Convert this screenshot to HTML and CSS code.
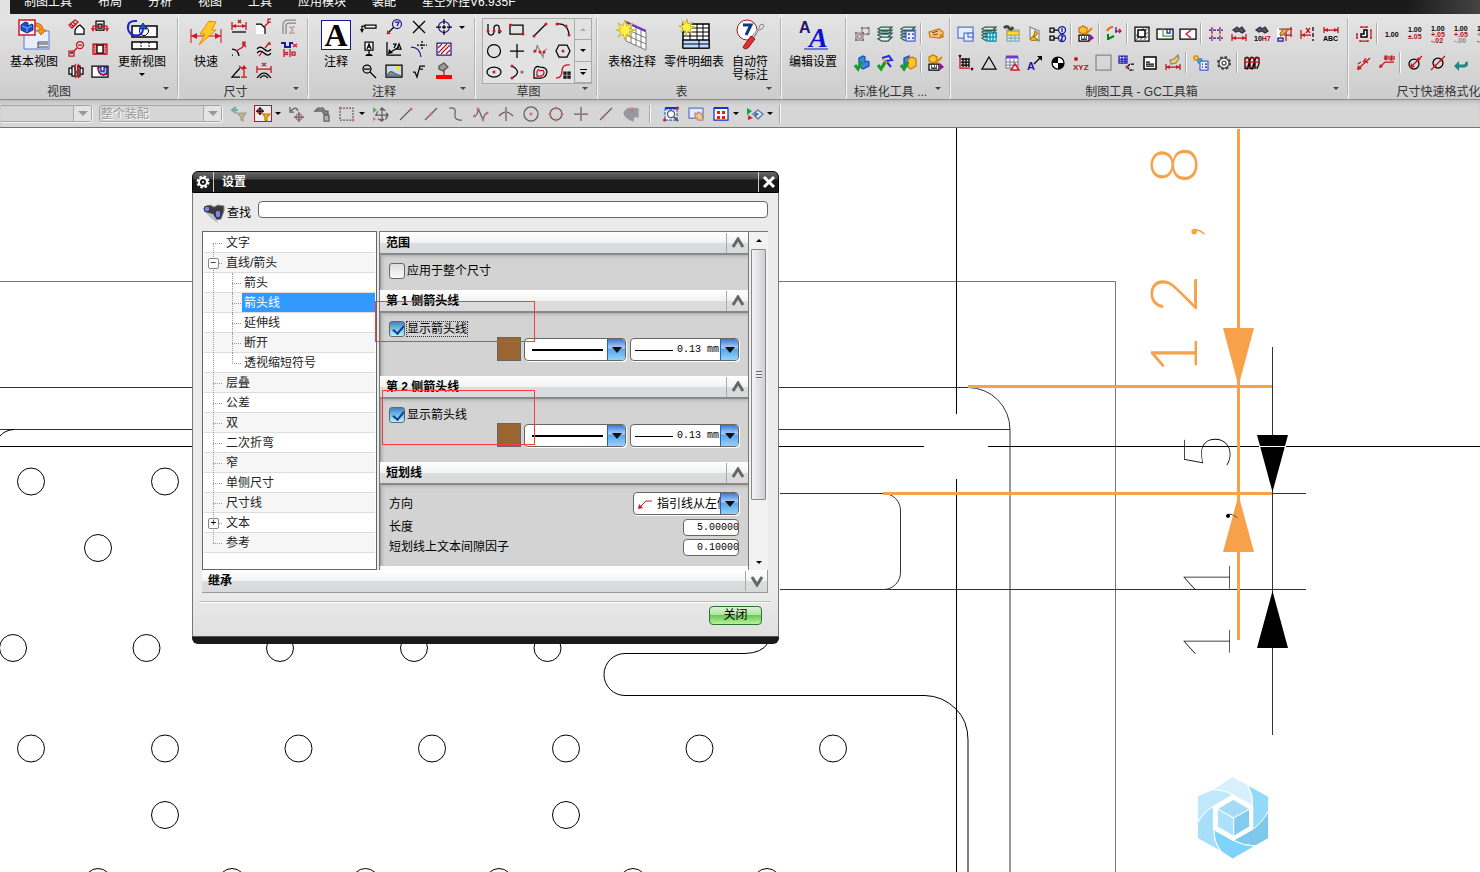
FILE: index.html
```html
<!DOCTYPE html>
<html lang="zh-CN">
<head>
<meta charset="utf-8">
<title>制图工具</title>
<link rel="stylesheet" href="styles.css">
</head>
<body>
<nav class="menu">
  <span class="menu-tab"></span>
  <a href="#">制图工具</a><a href="#">布局</a><a href="#">分析</a><a href="#">视图</a><a href="#">工具</a><a href="#">应用模块</a><a href="#">装配</a><a href="#">星空外挂V6.935F</a>
</nav>

<header class="ribbon">
  <section class="group g-view">
    <div class="group-body">
      <button class="big"><svg class="ic32" viewBox="0 0 32 32"><path class="pale" d="M6 12h25v18H6z"/><path d="M20 23h10M20 25h10M20 28h10M20 23v6" stroke="#444"/><path class="or" d="M17 4q8 0 8 7h3l-5 5-4-5h3q0-4-5-4z"/><path class="rw" d="M1 1h16v15H1z"/><path class="B" d="M3 6l4-3 3 1v3l4-2 1 1v5l-6 3-6-3z"/><path d="M4 7l5 2v4M9 9l5-2" stroke="#7db4ff"/></svg>基本视图</button>
      <div class="cols c2">
        <button class="t" aria-label="投影视图"><svg viewBox="0 0 16 16"><path class="r" d="M1 6l6-5 3 2-6 6zM3 5l3 3M5 3l3 3"/><path class="w" d="M7 15v-4q2-4 5-5l4 4v5z"/></svg></button>
        <button class="t" aria-label="旋转视图"><svg viewBox="0 0 16 16"><path class="w" d="M4 2h8v9H4z"/><path class="w" d="M6 5h4v4H6z"/><path class="r" d="M1 9V7h14v2"/><path class="R" d="M-1 9h4l-2 4zM13 9h4l-2 4z"/></svg></button>
        <button class="t" aria-label="局部放大图"><svg viewBox="0 0 16 16"><circle class="r" cx="12" cy="4" r="3.500"/><path class="r" d="M9 7l-4 4M1 10h5v5H1zM10 4h4"/><path d="M2 12h3"/></svg></button>
        <button class="t" aria-label="断开视图"><svg viewBox="0 0 16 16"><path class="rl" d="M2 3h3v10H2zM11 3h3v10h-3z"/><path class="r" d="M1 3h14v10H1z"/><path class="w" d="M5 4h6v8H5z"/></svg></button>
        <button class="t" aria-label="展开剖"><svg viewBox="0 0 16 16"><path class="w" d="M1 5h3v6H1zM4 3h3v10H4zM10 3h2v10h-2zM12 5h3v6h-3z"/><path class="r" d="M8 1q-3 3 0 7t-1 7M11 1q-3 3 0 7t-1 7"/></svg></button>
        <button class="t" aria-label="局部剖视图"><svg viewBox="0 0 16 16"><path class="w" d="M0 3h16v11H0z"/><path class="hb" d="M6 4q0 7 5 8l4-2V4h-3v4H9V4z"/><path class="r" d="M6 4q0 8 5 8t5-2"/></svg></button>
      </div>
      <button class="big"><svg class="ic32" viewBox="0 0 32 32"><path class="w2" d="M6 7h25v11H6z"/><circle cx="18" cy="12" r="4.500"/><path class="w2" d="M6 23h25v7H6z"/><path d="M15 23v7M23 23v7" stroke-dasharray="2 1"/><path d="M11 2Q1 1 2 10q2 8 11 6 4-1 4-7" stroke="#2222cc" stroke-width="2"/><path class="B" d="M17 4l4 6h-8z"/></svg>更新视图<i class="dd"></i></button>
    </div>
    <h2>视图</h2><i class="dd corner"></i>
  </section>

  <section class="group g-size">
    <div class="group-body">
      <button class="big narrow"><svg class="ic32" viewBox="0 0 32 32"><path class="r" d="M1 10v14M31 10v14M1 17h30" /><path class="R" d="M1 17l6-3v6zM31 17l-6-3v6z"/><path d="M19 2l7 1-4 8h4L9 26l6-11h-5z" fill="#ffc928" stroke="#f08a00"/></svg>快速</button>
      <div class="cols c3">
        <button class="t" aria-label="线性"><svg viewBox="0 0 16 16"><path class="r" d="M1 3v8M15 3v8M1 7h14"/><path class="R" d="M1 7l4-2v4zM15 7l-4-2v4z"/><path class="r" d="M7 1l3 3M10 1L7 4"/><path d="M1 13h14"/></svg></button>
        <button class="t" aria-label="倒斜角"><svg viewBox="0 0 16 16"><path class="W" d="M0 6h6l3 3v6H0z"/><path d="M0 5h5l4 4v6"/><path class="r" d="M8 8l5-5M15 0h-3v3h3"/></svg></button>
        <button class="t" aria-label="折弯"><svg viewBox="0 0 16 16"><path class="g" d="M2 15V6q0-5 5-5h8M5 15V7q0-3 3-3h7"/><path d="M14 8H9l3 3-3 3h5" stroke="#b99"/></svg></button>
        <button class="t" aria-label="半径"><svg viewBox="0 0 16 16"><path d="M1 8q6 0 7 7M1 14h1"/><path class="r" d="M5 10l7-4M12 6V1h2v2h-2l3 3"/></svg></button>
        <button class="t" aria-label="厚度"><svg viewBox="0 0 16 16"><path d="M1 8q3-4 7 0t7 0M1 12q3-4 7 0t7 0"/><path class="r" d="M3 15l3-4M9 7l5-6M11 3h4"/></svg></button>
        <button class="t" aria-label="坐标"><svg viewBox="0 0 16 16"><path class="b" d="M0 2h4v4h5V2h3" stroke-width="2"/><path class="r" d="M3 8v8M9 8v8M12 3l4 3M12 6l4-3M4 11l3 3M4 14l3-3M11 11h3v3h-3z"/></svg></button>
        <button class="t" aria-label="角度"><svg viewBox="0 0 16 16"><path d="M9 5L1 14h8"/><path class="r" d="M8 3l5 4v7M10 14h6"/><path class="R" d="M10 6l3-4 3 4z"/></svg></button>
        <button class="t" aria-label="弧长"><svg viewBox="0 0 16 16"><path class="r" d="M1 3v7M15 3v7M1 6h14M6 0l4 3M10 0L6 3"/><path d="M1 15q7-10 14 0M4 15q4-5 8 0"/></svg></button>
      </div>
    </div>
    <h2>尺寸</h2><i class="dd corner"></i>
  </section>

  <section class="group g-note">
    <div class="group-body">
      <button class="big narrow"><span class="bigA">A</span>注释</button>
      <div class="cols c4">
        <button class="t" aria-label="特征控制框"><svg viewBox="0 0 16 16"><path class="w" d="M4 6h11v3H4z"/><path d="M1 12V7h3"/><path class="K" d="M-1 10h4l-2 4z"/></svg></button>
        <button class="t" aria-label="符号标注"><svg viewBox="0 0 16 16"><circle class="b" cx="11" cy="5" r="4.500"/><path class="b" d="M9 3h4l-2 4"/><path d="M8 8l-7 7"/><path class="R" d="M1 11v4h4z"/></svg></button>
        <button class="t" aria-label="相交符号"><svg viewBox="0 0 16 16"><path d="M2 2l12 12M14 2L2 14"/></svg></button>
        <button class="t" aria-label="中心标记"><svg viewBox="0 0 16 16"><circle class="b" cx="8" cy="8" r="5.500"/><path d="M8 0v5M8 6v4M8 11v5M0 8h5M6 8h4M11 8h5"/></svg></button>
        <button class="t" aria-label="基准特征"><svg viewBox="0 0 16 16"><path class="w" d="M4 1h8v8H4z"/><path d="M6 8l2-5 2 5M7 6h2M8 9v5"/><path class="K" d="M4 15h8l-2-2H6z"/></svg></button>
        <button class="t" aria-label="表面粗糙度"><svg viewBox="0 0 16 16"><path d="M1 1v13h14M3 12L13 6M7 3h3L8 7M11 8l2-5 2 5z"/><path class="K" d="M2 13l1-5 4 4z"/></svg></button>
        <button class="t" aria-label="偏置中心点"><svg viewBox="0 0 16 16"><path class="b" d="M0 6q9 0 10 10"/><path d="M11 0v8M6 4h10" stroke-dasharray="2 1"/></svg></button>
        <button class="t" aria-label="剖面线"><svg viewBox="0 0 16 16"><path class="W" d="M1 2h14v12H1z"/><path class="r" d="M2 7l4-4M2 12l9-9M5 13l9-9M10 13l4-4"/><path class="b" d="M1 2h14v12H1z"/></svg></button>
        <button class="t" aria-label="焊接符号"><svg viewBox="0 0 16 16"><circle cx="6" cy="6" r="4"/><path d="M3 6h6M9 9l6 6"/></svg></button>
        <button class="t" aria-label="图像"><svg viewBox="0 0 16 16"><path d="M0 2h16v12H0z" fill="#cfdbe6"/><path d="M1 13q3-7 7-3l7 3z" fill="#7a8ea3" stroke="#567"/><circle class="Y" cx="12" cy="5" r="2"/></svg></button>
        <button class="t" aria-label="目标点"><svg viewBox="0 0 16 16"><path d="M2 9h2l2 5 3-11h5M9 6h3"/></svg></button>
        <button class="t" aria-label="填充"><svg viewBox="0 0 16 16"><path d="M3 3l5-3 4 4-5 4-4-2z" fill="#999" stroke="#555"/><path class="r" d="M8 7v5"/><path fill="#f00" stroke="none" d="M0 12h16v4H0z"/></svg></button>
      </div>
      <i class="dd note-dd"></i>
    </div>
    <h2>注释</h2><i class="dd corner"></i>
  </section>

  <section class="group g-sketch">
    <div class="group-body">
      <div class="gallery">
        <div class="gallery-grid">
          <button class="t" aria-label="轮廓"><svg viewBox="0 0 16 16"><path d="M2 2v7q0 4 3 4t3-4V6q0-3 3-3t2 6q-1 4 2 0"/><g class="R"><circle cx="2" cy="9" r="1.500"/><circle cx="8" cy="9" r="1.500"/><circle cx="14" cy="9" r="1.500"/></g></svg></button>
          <button class="t" aria-label="矩形"><svg viewBox="0 0 16 16"><path d="M1 3h13v9H1z"/><g class="R"><circle cx="1.500" cy="3" r="1.500"/><circle cx="14" cy="12" r="1.500"/></g></svg></button>
          <button class="t" aria-label="直线"><svg viewBox="0 0 16 16"><path d="M2 14L14 2"/><g class="R"><circle cx="2" cy="14" r="1.500"/><circle cx="14" cy="2" r="1.500"/></g></svg></button>
          <button class="t" aria-label="圆弧"><svg viewBox="0 0 16 16"><path d="M2 2q11-1 12 11"/><g class="R"><circle cx="2" cy="2" r="1.500"/><circle cx="11" cy="4" r="1.500"/><circle cx="14" cy="13" r="1.500"/></g></svg></button>
          <button class="t" aria-label="圆"><svg viewBox="0 0 16 16"><circle cx="8" cy="8" r="6.500"/></svg></button>
          <button class="t" aria-label="点"><svg viewBox="0 0 16 16"><path d="M8 1v14M1 8h14"/></svg></button>
          <button class="t" aria-label="艺术样条"><svg viewBox="0 0 16 16"><path class="g" d="M1 9q4 0 4-7 3 7 6 12 0-7 4-8"/><g class="R"><circle cx="3" cy="8" r="1.500"/><circle cx="8" cy="9" r="1.500"/><circle cx="12" cy="9" r="1.500"/></g></svg></button>
          <button class="t" aria-label="多边形"><svg viewBox="0 0 16 16"><path d="M4 2h8l3 6-3 6H4L1 8z"/><circle class="R" cx="8" cy="8" r="1.500"/></svg></button>
          <button class="t" aria-label="椭圆"><svg viewBox="0 0 16 16"><ellipse cx="8" cy="8" rx="7" ry="5"/><circle class="R" cx="8" cy="8" r="1.500"/></svg></button>
          <button class="t" aria-label="二次曲线"><svg viewBox="0 0 16 16"><path d="M3 2q11 6 0 12"/><g class="R"><circle cx="3" cy="2" r="1.500"/><circle cx="3" cy="14" r="1.500"/></g><circle cx="13" cy="8" r="1" fill="#777" stroke="#777"/></svg></button>
          <button class="t" aria-label="偏置曲线"><svg viewBox="0 0 16 16"><path d="M2 14V7q1-6 6-4 7 0 7 5-1 6-6 6z"/><path class="r" d="M5 12V8q1-4 3-1 4-2 4 2-1 3-3 3z"/></svg></button>
          <button class="t" aria-label="阵列曲线"><svg viewBox="0 0 16 16"><path class="r" d="M15 1Q7 0 7 7t-6 7"/><path class="w" d="M9 8h2v2H9zM13 8h2v2h-2zM9 12h2v2H9zM13 12h2v2h-2z"/></svg></button>
        </div>
        <div class="gallery-scroll"><button aria-label="上"><i class="up"></i></button><button aria-label="下"><i class="dd"></i></button><button aria-label="更多"><i class="bar"></i><i class="dd"></i></button></div>
      </div>
    </div>
    <h2>草图</h2><i class="dd corner"></i>
  </section>

  <section class="group g-table">
    <div class="group-body">
      <button class="big"><svg class="ic32" viewBox="0 0 32 32"><path d="M10 4l20 9v18l-20-9z" fill="#fff" stroke="#777"/><path d="M10 10l20 9M10 16l20 9M15 6v18M20 8v18M25 11v18" stroke="#777"/><path d="M10 3l20 9" stroke="#7038c8" stroke-width="2"/><path class="star" d="M9 1l2 6 6-3-4 6 6 1-6 2 3 5-5-3-2 6-2-6-5 3 3-5-5-2 5-1-3-6 5 3z"/></svg>表格注释</button>
      <button class="big"><svg class="ic32" viewBox="0 0 32 32"><path class="w2" d="M5 5h26v24H5z"/><path d="M5 21h26v8H5z" fill="#bcdcff"/><path d="M5 9h26M5 13h26M5 17h26M5 21h26M5 25h26M12 5v16M19 5v16M25 5v16M21 21v8"/><path class="star" d="M9 0l1 5 5-2-3 4 5 1-5 2 2 4-4-2-2 4-1-5-4 2 2-4-4-2 5-1-2-4 4 2z"/></svg>零件明细表</button>
      <button class="big"><svg class="ic32" viewBox="0 0 32 32"><circle cx="13" cy="11" r="10" fill="#fff" stroke="#a01818"/><path d="M9 6h8l-5 10" stroke="#123a80" stroke-width="3"/><path d="M18 17l7-8 1-3 3-1 1 2-2 3-3 1-6 8z" fill="#ddd" stroke="#888"/><path d="M17 17l4 3-7 9q-4 2-5-1z" fill="#e03030" stroke="#a01010"/></svg>自动符<br>号标注</button>
    </div>
    <h2>表</h2><i class="dd corner"></i>
  </section>

  <section class="group g-edit">
    <div class="group-body"><button class="big"><svg class="ic32" viewBox="0 0 32 32"><text x="2" y="14" class="ta">A</text><text x="12" y="28" class="tb">A</text><path d="M7 30h24" stroke="#1010d0"/></svg>编辑设置</button></div>
  </section>

  <section class="group g-std">
    <div class="group-body rows">
      <div class="row">
        <button class="t" aria-label="属性工具"><svg viewBox="0 0 16 16"><path class="g" d="M2 7h7v7H2zM8 2h7v6H8z" /><path class="gd" d="M1 6h2v2H1zM8 6h2v2H8zM1 13h2v2H1zM8 13h2v2H8zM13 1h2v2h-2zM13 7h2v2h-2zM7 1h2v2H7z"/><circle cx="5.500" cy="10.500" r="2" stroke="#b77"/></svg></button>
        <button class="t" aria-label="图层"><svg viewBox="0 0 16 16"><path class="lay" d="M1 13l3-2h11l-4 4H5zM1 9l3-2h11l-4 4H5zM1 6l3-2h11l-4 4H5zM1 3l3-2h11l-4 4H5z"/></svg></button>
        <button class="t" aria-label="图层类别"><svg viewBox="0 0 16 16"><path class="lay" d="M1 12l3-2h11l-4 4H4zM1 9l3-2h11l-4 4H4zM1 6l3-2h11l-4 4H4zM1 3l3-2h11l-4 4H4z"/><path d="M6 5h9v10H6z" fill="#eef" stroke="#46c"/><path class="b" d="M8 8h2M8 12h2M12 8h2M12 12h2"/></svg></button>
        <i class="sep"></i>
        <button class="t" aria-label="标签"><svg viewBox="0 0 16 16"><path d="M1 6l10-3 4 3v5h-2V8l-1 4-10-1z" fill="#ffc966" stroke="#c07810"/><path d="M4 7l6-2M5 9l5-1" stroke="#844"/></svg></button>
      </div>
      <div class="row">
        <button class="t" aria-label="检查部件"><svg viewBox="0 0 16 16"><path class="B3" d="M5 3l4-2 2 1v5l3-1 1 1v4l-6 3-4-3z"/><path class="chk" d="M1 10l3 4 4-7"/></svg></button>
        <button class="t" aria-label="检查草图"><svg viewBox="0 0 16 16"><path d="M5 3l7-2 3 4-6 1 5 6" stroke="#23c" stroke-width="2"/><path d="M5 4l5 3-4 6" stroke="#f80"/><path class="chk" d="M1 10l3 4 4-7"/></svg></button>
        <button class="t" aria-label="检查装配"><svg viewBox="0 0 16 16"><path class="B3" d="M4 3l5-2v9l-5 3z"/><path class="O3" d="M8 4l4-2 4 2v7l-5 3-3-2z"/><path class="chk" d="M1 10l3 4 4-7"/></svg></button>
        <i class="sep"></i>
        <button class="t" aria-label="规范"><svg viewBox="0 0 16 16"><path class="O3" d="M1 2l4-2 4 2v4L5 8 1 6z"/><path d="M8 8l6-6" stroke="#d80" stroke-width="2"/><path class="w" d="M1 9h10v6H1z"/><path d="M3 11h1M6 11h1M8 11h1M3 13h6"/><path fill="#a0a" stroke="none" d="M12 8l4 4-4 3z"/></svg></button>
      </div>
    </div>
    <h2>标准化工具 ...</h2><i class="dd corner"></i>
  </section>

  <section class="group g-gc">
    <div class="group-body rows">
      <div class="row">
        <button class="t" aria-label="图框"><svg viewBox="0 0 16 16"><path class="pale" d="M0 1h15v11H0z"/><path class="pale" d="M6 7h9v8H6z" /><path class="pale" d="M10 7h5v4h-5z"/></svg></button>
        <button class="t" aria-label="图层表"><svg viewBox="0 0 16 16"><path class="lay" d="M1 12l3-2h11l-4 4H4zM1 9l3-2h11l-4 4H4zM1 6l3-2h11l-4 4H4zM1 3l3-2h11l-4 4H4z"/><path d="M6 7h9v8H6zM6 11h9M9 7v8M12 7v8" fill="#cff" stroke="#08a"/></svg></button>
        <button class="t" aria-label="查找表"><svg viewBox="0 0 16 16"><path d="M3 4h12v11H3z" fill="#d5e8fa" stroke="#8ab"/><path d="M3 5h12v4H3z" fill="#ffd83a" stroke="#ca2"/><path d="M0 2q3-3 5 0t4-1" stroke="#444" stroke-width="3"/><path d="M7 9v6M11 9v6M3 12h12" stroke="#8ab"/></svg></button>
        <button class="t" aria-label="区域"><svg viewBox="0 0 16 16"><path d="M3 1l9 4v10L3 11z" fill="#eee" stroke="#88a"/><path d="M8 5q5 2-1 6l4 3q-8 1-8-1 5-3 5-8z" fill="#ffc928" stroke="#a70"/></svg></button>
        <button class="t" aria-label="序号"><svg viewBox="0 0 16 16"><path d="M0 2h4v4H0zM0 10h4v4H0zM4 4h5M4 12h5"/><circle class="b" cx="12" cy="4" r="3.500"/><circle class="b" cx="12" cy="12" r="3.500"/><path class="b" d="M12 2v4M11 10h2l-2 4h2"/></svg></button>
        <i class="sep"></i>
        <button class="t" aria-label="编辑规范"><svg viewBox="0 0 16 16"><path class="O3" d="M1 2l4-2 4 2v4L5 8 1 6z"/><path d="M8 8l6-6" stroke="#d80" stroke-width="2"/><path class="w" d="M1 9h10v6H1z"/><path d="M3 11h1M6 11h1M8 11h1M3 13h6"/><path fill="#a0a" stroke="none" d="M12 8l4 4-4 3z"/></svg></button>
        <i class="sep"></i>
        <button class="t" aria-label="坐标系"><svg viewBox="0 0 16 16"><path d="M2 14V8M2 13l6-3" stroke="#080" stroke-width="2"/><path d="M1 5q2-4 6-4" stroke="#e60" stroke-width="2"/><path class="r" d="M9 5h6M13 3l2 2-2 2" /><path d="M10 7V1" stroke="#22a"/></svg></button>
        <i class="sep"></i>
        <button class="t" aria-label="孔剖"><svg viewBox="0 0 16 16"><path class="w" d="M1 1h14v14H1z"/><path d="M2 14L14 2M6 14l8-8M2 10l8-8M10 14l4-4" stroke="#888"/><path class="w2" d="M4 4h7v7H4z"/></svg></button>
        <button class="t" aria-label="剖切"><svg viewBox="0 0 16 16"><path class="w" d="M0 3h16v10H0z"/><path d="M6 3v7h9" stroke="#3a3"/><path class="b" d="M10 3v4h3V3"/></svg></button>
        <button class="t" aria-label="断裂"><svg viewBox="0 0 16 16"><path class="w" d="M0 3h16v10H0z"/><path class="r" d="M11 4L6 8l5 4"/></svg></button>
        <i class="sep"></i>
        <button class="t" aria-label="栅格"><svg viewBox="0 0 16 16"><path class="b" d="M1 4h14M1 12h14" stroke-dasharray="3 1"/><path class="r" d="M4 1v14M12 1v14" stroke-dasharray="3 1"/></svg></button>
        <button class="t" aria-label="查找尺寸"><svg viewBox="0 0 16 16"><path class="bin" d="M2 4l4-3 2 2 3-2 3 4-3 2-3-2-3 1z"/><path class="r" d="M1 8v7M15 8v7M1 12h14"/><path class="R" d="M1 12l4-2v4zM15 12l-4-2v4z"/></svg></button>
        <button class="t" aria-label="查找公差"><svg viewBox="0 0 16 16"><path class="bin" d="M2 4l4-3 2 2 3-2 3 4-3 2-3-2-3 1z"/><text x="0" y="15" class="ts">10<tspan class="tr">H7</tspan></text></svg></button>
        <button class="t" aria-label="排列尺寸"><svg viewBox="0 0 16 16"><path class="W" d="M0 2h9v9H0z"/><path class="r" d="M2 3h13M7 9h8M14 1v10M9 3v12"/><path d="M3 8l3-5 5 1-3 3-4 3z" fill="#f5b82e" stroke="#964"/><path class="b" d="M1 12h5v3H1z"/></svg></button>
        <button class="t" aria-label="清除尺寸"><svg viewBox="0 0 16 16"><path class="r" d="M1 4v9M1 9h10M6 2l4 5M10 2L6 7"/><path class="R" d="M1 9l4-2v4z"/><path d="M13 1v14" stroke-dasharray="4 2"/></svg></button>
        <button class="t" aria-label="尺寸文本"><svg viewBox="0 0 16 16"><path class="r" d="M1 1v6M15 1v6M1 4h14"/><path class="R" d="M1 4l4-2v4zM15 4l-4-2v4z"/><text x="0" y="15" class="ts">ABC</text></svg></button>
      </div>
      <div class="row">
        <button class="t" aria-label="网格"><svg viewBox="0 0 16 16"><path d="M3 4h8M3 7h8M3 10h8M5 3v9M8 3v9M11 3v9M13 13l2 2M15 13l-2 2"/><path class="r" d="M2 3v10h10"/><path d="M1 0l1 2 1-2"/></svg></button>
        <button class="t" aria-label="三角"><svg viewBox="0 0 16 16"><path d="M8 2l7 12H1z"/></svg></button>
        <button class="t" aria-label="表格符号"><svg viewBox="0 0 16 16"><path d="M2 2h12v11H2zM2 7h12M2 10h12M6 4v9M10 4v9" fill="#fff" stroke="#88a"/><path d="M2 2h12" stroke="#7038c8" stroke-width="3"/><path class="rw" d="M11 9l4 6H7z"/></svg></button>
        <button class="t" aria-label="方向箭头"><svg viewBox="0 0 16 16"><text x="0" y="15" class="tn">A</text><path d="M7 9l7-7"/><path class="K" d="M15 1v5l-5-5z"/></svg></button>
        <button class="t" aria-label="质心"><svg viewBox="0 0 16 16"><circle cx="8" cy="8" r="6" fill="#fff"/><path class="K" d="M8 8V2a6 6 0 0 0-6 6zM8 8v6a6 6 0 0 0 6-6z"/></svg></button>
        <button class="t" aria-label="坐标标注"><svg viewBox="0 0 16 16"><circle class="R" cx="3" cy="4" r="2"/><text x="0" y="15" class="tx">XYZ</text></svg></button>
        <button class="t" aria-label="方框"><svg viewBox="0 0 16 16"><path class="g" d="M0 0h15v15H0z"/></svg></button>
        <button class="t" aria-label="孔表"><svg viewBox="0 0 16 16"><path d="M0 1h8v7H0zM0 4h8M0 6h8M3 1v7M6 1v7" fill="#fff" stroke="#22a"/><path d="M15 9h-4l-3 3 3 3h4" stroke-dasharray="3 1"/><circle class="R" cx="8" cy="12" r="1.500"/></svg></button>
        <button class="t" aria-label="技术要求"><svg viewBox="0 0 16 16"><path class="w2" d="M2 2h12v12H2z"/><path d="M4 7h4M4 9h8M4 11h8"/></svg></button>
        <button class="t" aria-label="尺寸刷"><svg viewBox="0 0 16 16"><path d="M5 5l4-1 4-4 1 3-3 5-5 1z" fill="#f2cf4a" stroke="#888"/><path class="r" d="M1 9v6M15 9v6M1 12h14"/><path class="R" d="M1 12l4-2v4zM15 12l-4-2v4z"/></svg></button>
        <i class="sep"></i>
        <button class="t" aria-label="齿轮参数"><svg viewBox="0 0 16 16"><circle cx="3" cy="3" r="2" stroke="#e90" stroke-width="2"/><circle cx="7" cy="6" r="2" stroke="#39c" stroke-width="2"/><path d="M7 6h8v9H7z" fill="#eef" stroke="#46c"/><path class="b" d="M9 9h1M9 12h1M12 9h2M12 12h2"/></svg></button>
        <button class="t" aria-label="齿轮"><svg viewBox="0 0 16 16"><circle cx="8" cy="8" r="6" stroke="#444" stroke-width="2" stroke-dasharray="2.500 2.200"/><circle cx="8" cy="8" r="5" fill="#fff" stroke="#444"/><circle cx="8" cy="8" r="2" stroke="#444"/></svg></button>
        <i class="sep"></i>
        <button class="t" aria-label="弹簧"><svg viewBox="0 0 16 16"><path d="M1 14V4q2-4 4 0v8q-2 4-4 0M6 14V4q2-4 4 0v8q-2 4-4 0M11 14V4q2-4 4 0v5l-2 5M3 14L7 2M8 14l4-12"/><path class="r" d="M0 3h16M0 7h15M0 12h14" /></svg></button>
      </div>
    </div>
    <h2>制图工具 - GC工具箱</h2><i class="dd corner"></i>
  </section>

  <section class="group g-fmt">
    <div class="group-body rows">
      <div class="row">
        <button class="t" aria-label="尺寸格式"><svg viewBox="0 0 16 16"><path class="w2" d="M5 11V8h3V4h3v7z"/><path class="r" d="M5 1h6M5 0v2M11 0v2M1 8v4M0 8h2M0 12h2M15 4v8M14 4h2M14 12h2M4 15h8M4 14v2M12 14v2"/></svg></button>
        <i class="sep"></i>
        <button class="t" aria-label="无公差"><svg viewBox="0 0 16 16"><text x="1" y="11" class="tm">1.00</text></svg></button>
        <button class="t" aria-label="双向公差"><svg viewBox="0 0 16 16"><text x="1" y="6" class="tm">1.00</text><text x="1" y="13" class="tm tr">±.05</text></svg></button>
        <button class="t" aria-label="极限公差"><svg viewBox="0 0 16 16"><text x="1" y="5" class="tm">1.00</text><text x="1" y="11" class="tm tr">+.05</text><text x="1" y="17" class="tm tr">-.02</text></svg></button>
        <button class="t" aria-label="上公差"><svg viewBox="0 0 16 16"><text x="1" y="5" class="tm">1.00</text><text x="1" y="11" class="tm tr">+.05</text><text x="1" y="17" class="tm tg">-.00</text></svg></button>
        <button class="t" aria-label="下公差"><svg viewBox="0 0 16 16"><text x="1" y="5" class="tm">1.00</text><text x="1" y="11" class="tm tg">+.00</text><text x="1" y="17" class="tm tr">-.05</text></svg></button>
      </div>
      <div class="row">
        <button class="t" aria-label="半径直径"><svg viewBox="0 0 16 16"><path class="r" d="M2 14L14 3M2 9l3-2M8 5l4 3M7 7l3-4"/><path class="R" d="M1 15l1-5 4 4z"/></svg></button>
        <button class="t" aria-label="半径引线"><svg viewBox="0 0 16 16"><path class="r" d="M1 12l5-5h9M6 5V1h2v2H6l2 2M10 1v4M12 1h1v4h-1zM15 1v4"/><path class="R" d="M0 13l1-4 3 3z"/></svg></button>
        <i class="sep"></i>
        <button class="t" aria-label="直径"><svg viewBox="0 0 16 16"><circle cx="7" cy="9" r="5"/><path class="r" d="M4 12L15 1"/><path class="R" d="M3 13l1-5 4 4zM9 6l2-4 3 3z"/></svg></button>
        <button class="t" aria-label="外直径"><svg viewBox="0 0 16 16"><circle cx="8" cy="8" r="5"/><path class="r" d="M1 15L15 1"/><path class="R" d="M3 13l2-4 2 2zM13 3l-2 4-2-2z"/></svg></button>
        <button class="t" aria-label="返回"><svg viewBox="0 0 16 16"><path d="M4 11h7q4-1 2-4" stroke="#188a8a" stroke-width="3"/><path fill="#188a8a" stroke="none" d="M6 6v10l-5-5z"/></svg></button>
      </div>
    </div>
    <h2>尺寸快速格式化工具</h2>
  </section>
</header>

<div class="selbar">
  <span class="dcombo first"><select disabled aria-label="类型过滤器"><option></option></select></span>
  <span class="dcombo"><select disabled aria-label="选择范围"><option>整个装配</option></select></span>
  <div class="seltools">
    <button class="t dim" aria-label="重置过滤器"><svg viewBox="0 0 16 16"><path d="M6 1L2 4l4 3M2 4h6" stroke="#288" stroke-width="2"/><path d="M7 7h9l-3 4v4l-2-1v-3z" fill="#a96" stroke="#875"/></svg></button>
    <button class="t on" aria-label="常规选择过滤器"><svg viewBox="0 0 16 16"><circle class="r" cx="5" cy="5" r="2.500"/><path d="M5 1v8M1 5h8"/><path class="O3" d="M8 8h7l-3 3v4l-2-1v-3z"/></svg></button>
    <i class="dd"></i>
    <button class="t dim" aria-label="撤销"><svg viewBox="0 0 16 16"><path d="M2 5q5-6 7 0M1 1v5h4"/><circle class="r" cx="10" cy="11" r="3"/><path d="M10 6v10M5 11h10"/></svg></button>
    <button class="t dim" aria-label="捕捉"><svg viewBox="0 0 16 16"><path d="M1 5l3-3h5l2 3h3v3h-4L8 5z" fill="#555"/><path d="M10 9h5v6h-5z" fill="#998"/></svg></button>
    <button class="t dim" aria-label="矩形选择"><svg viewBox="0 0 16 16"><path d="M1 2h13v12H1z" stroke-dasharray="2 1"/><circle class="R" cx="1.500" cy="2" r="1.500"/><circle class="R" cx="14" cy="14" r="1.500"/></svg></button>
    <i class="dd"></i>
    <button class="t dim" aria-label="移动"><svg viewBox="0 0 16 16"><circle cx="9" cy="9" r="5.500" stroke-dasharray="5 3"/><path d="M9 2v13M2 9h13M7 4l2-2 2 2M7 13l2 2 2-2M13 7l2 2-2 2"/><path fill="#080" stroke="none" d="M0 1l4 3-4 3z"/><path class="R" d="M0 15v-4l3 2z"/></svg></button>
    <button class="t dim" aria-label="端点"><svg viewBox="0 0 16 16"><path d="M2 14L13 3"/><circle class="R" cx="13" cy="3" r="1.500"/></svg></button>
    <button class="t dim" aria-label="中点"><svg viewBox="0 0 16 16"><path d="M2 14L14 2"/><circle class="R" cx="8" cy="8" r="1.500"/></svg></button>
    <button class="t dim" aria-label="控制点"><svg viewBox="0 0 16 16"><path d="M2 2h3q3 1 2 6t4 6h3"/><circle class="R" cx="2" cy="2" r="1"/></svg></button>
    <button class="t dim" aria-label="极点"><svg viewBox="0 0 16 16"><path d="M1 10Q5 10 5 2l5 12q1-7 5-7"/><circle class="R" cx="1.500" cy="10" r="1.500"/><circle class="R" cx="5" cy="3" r="1.500"/><circle class="R" cx="10" cy="13" r="1.500"/><circle class="R" cx="14" cy="7" r="1.500"/></svg></button>
    <button class="t dim" aria-label="交点"><svg viewBox="0 0 16 16"><path d="M1 10q7-8 14 0M8 1v14"/><circle class="R" cx="8" cy="6" r="1.500"/></svg></button>
    <button class="t dim" aria-label="圆心"><svg viewBox="0 0 16 16"><circle cx="8" cy="8" r="7"/><circle class="R" cx="8" cy="8" r="1.500"/></svg></button>
    <button class="t dim" aria-label="象限点"><svg viewBox="0 0 16 16"><circle cx="8" cy="8" r="6"/><g class="R"><circle cx="8" cy="2" r="1.500"/><circle cx="8" cy="14" r="1.500"/><circle cx="2" cy="8" r="1.500"/><circle cx="14" cy="8" r="1.500"/></g></svg></button>
    <button class="t dim" aria-label="现有点"><svg viewBox="0 0 16 16"><path d="M8 1v14M1 8h14"/><circle class="R" cx="8" cy="8" r="1"/></svg></button>
    <button class="t dim" aria-label="曲线上点"><svg viewBox="0 0 16 16"><path d="M2 14L14 2"/><circle class="R" cx="5" cy="11" r="1.500"/></svg></button>
    <button class="t dim" aria-label="面上点"><svg viewBox="0 0 16 16"><path d="M1 7q3-7 14-4v8q-5-2-5 4Q2 12 1 7z" fill="#667" stroke="#667"/><circle class="R" cx="9" cy="5" r="1.500"/></svg></button>
    <i class="sep wide"></i>
    <button class="t" aria-label="窗口缩放"><svg viewBox="0 0 16 16"><path d="M2 3h12v11H2z" fill="#e8f0ff" stroke="#46c" stroke-dasharray="3 1"/><path d="M2 2h12" stroke="#13c" stroke-width="2"/><circle cx="8" cy="8" r="3.500" fill="#fff" stroke="#555"/><path d="M11 11l4 4" stroke="#555" stroke-width="2"/><circle class="R" cx="14.500" cy="2" r="1.500"/><circle class="R" cx="1.500" cy="14" r="1.500"/></svg></button>
    <button class="t" aria-label="平移"><svg viewBox="0 0 16 16"><path class="pale" d="M1 2h14v10H1z"/><path d="M7 7l2 1 1-2 4 2 1 6h-5l-3-4z" fill="#f5c88a" stroke="#b87"/></svg></button>
    <button class="t" aria-label="适合窗口"><svg viewBox="0 0 16 16"><path d="M1 2h14v12H1z" fill="#fff" stroke="#13c"/><path d="M1 2h14" stroke="#13c" stroke-width="2"/><path fill="#e20" stroke="none" d="M4 5h3v3H4zM9 5h3v3H9zM4 10h3v3H4zM9 10h3v3H9z"/></svg></button>
    <i class="dd"></i>
    <button class="t" aria-label="渲染样式"><svg viewBox="0 0 16 16"><path fill="#0a4" stroke="none" d="M0 2l5 3-5 4z"/><path fill="#d22" stroke="none" d="M1 9l5 3-5 2z"/><path d="M6 8l5-4 5 4-5 5z" fill="#dfe9f8" stroke="#57a"/><path d="M8 6l4 2-4 3z" fill="#46a" stroke="none"/></svg></button>
    <i class="dd"></i>
    <i class="sep"></i>
  </div>
</div>

<main class="canvas">
  <svg class="drawing" aria-hidden="true">
    <g transform="translate(0 -128)">
      <g class="ln grey"><path d="M0 281.500H1115.500V1400"/></g>
      <g class="ln dark">
        <path d="M0 387.500H968A42 42 0 0 1 1010 429.500V1400M0 429.500H1010M780 493.500H883A17 17 0 0 1 900.500 511V572A17 17 0 0 1 883 589.500M780 589.500H1306M1272 493.500H1306M1272.500 347V735"/>
      </g>
      <g class="ln">
        <path d="M0 446.500H924M988 446.500H1480M956.500 128V414M956.500 479V1400M0 436Q5 430 14 429.500"/>
        <path d="M768 643Q762 653 745 653.500H625A21 21 0 0 0 625 695.500H925Q943 696 956 709 968 721 968 740V1400"/>
        <circle cx="31" cy="481.500" r="13.500"/><circle cx="165" cy="481.500" r="13.500"/><circle cx="98" cy="548" r="13.500"/>
        <circle cx="13" cy="648" r="13.500"/><circle cx="146.500" cy="648" r="13.500"/><circle cx="280" cy="648" r="13.500"/><circle cx="414" cy="648" r="13.500"/><circle cx="547.500" cy="648" r="13.500"/>
        <circle cx="31" cy="748.500" r="13.500"/><circle cx="165" cy="748.500" r="13.500"/><circle cx="298.500" cy="748.500" r="13.500"/><circle cx="432" cy="748.500" r="13.500"/><circle cx="566" cy="748.500" r="13.500"/><circle cx="699.500" cy="748.500" r="13.500"/><circle cx="833" cy="748.500" r="13.500"/>
        <circle cx="165" cy="815" r="13.500"/><circle cx="566" cy="815" r="13.500"/>
        <circle cx="98" cy="882" r="13.500"/><circle cx="232" cy="882" r="13.500"/><circle cx="365.500" cy="882" r="13.500"/><circle cx="499" cy="882" r="13.500"/><circle cx="633" cy="882" r="13.500"/><circle cx="767" cy="882" r="13.500"/>
      </g>
      <path class="K" d="M1257 435h31l-15.500 57zM1272.500 591l15.500 57h-31z"/>
      <path d="M1259 446.500h27" stroke="#fff"/>
      <g class="orange-line"><path d="M968 386.500H1272M883 493.500H1272M1238.500 129V640"/></g>
      <path class="orange" d="M1223 328h31l-15.500 58zM1238.500 495l15.500 57h-31z"/>
      <g class="dim-orange">
        <text transform="translate(1197 374) rotate(-90)">1</text>
        <text transform="translate(1197 313) rotate(-90)">2</text>
        <text transform="translate(1197 239) rotate(-90)">,</text>
        <text transform="translate(1197 184) rotate(-90)">8</text>
      </g>
      <g class="dim-black">
        <text transform="translate(1230 662) rotate(-90)">1</text>
        <text transform="translate(1230 598) rotate(-90)">1</text>
        <text transform="translate(1230 523) rotate(-90)">,</text>
        <text transform="translate(1230 471) rotate(-90)">5</text>
      </g>
      <g transform="translate(1180 760) scale(.3333)" stroke="#fff" stroke-width="3">
        <path fill="#d8effc" d="M95 90L158 50 204 75Q220 105 218 137L158 104Q130 88 95 90z"/>
        <path fill="#93d9fa" d="M204 75L266 110V152Q245 195 218 208V137Q220 105 204 75z"/>
        <path fill="#7ec8ee" d="M266 152V235L226 258Q190 258 160 241L218 208Q245 190 266 152z"/>
        <path fill="#7fd3fa" d="M226 258L158 297 124 275Q100 245 102 209L160 241Q190 258 226 258z"/>
        <path fill="#a8defa" d="M124 275L52 235V190Q70 155 102 138V209Q100 245 124 275z"/>
        <path fill="#bfe8fd" d="M52 190V108L95 90Q130 88 158 104L102 138Q70 155 52 190z"/>
        <path fill="#fff" d="M158 106L218 140V208L158 241 100 208V140z"/>
        <path fill="#a6dbf6" d="M160 118L209 147 161 174 112 147z"/>
        <path fill="#aee0fa" d="M112 147L161 174V229L112 200z"/>
        <path fill="#84cbf0" d="M161 174L209 147V200L161 229z"/>
      </g>
    </g>
  </svg>

  <section class="dialog">
    <header class="title">
      <svg viewBox="0 0 16 16" width="16" height="16"><circle cx="8" cy="8" r="5.500" stroke="#fff" stroke-width="2" stroke-dasharray="2.500 1.800"/><circle cx="8" cy="8" r="4" stroke="#fff" stroke-width="2"/><circle cx="8" cy="8" r="1" fill="#fff" stroke="none"/></svg>
      <h1>设置</h1>
      <button class="x" aria-label="关闭窗口"><svg viewBox="0 0 16 16" width="16" height="16"><path d="M3 3l10 10M13 3L3 13" stroke="#fff" stroke-width="3"/></svg></button>
    </header>
    <div class="dialog-body">
      <div class="search">
        <svg viewBox="0 0 24 20" width="24" height="20"><path d="M3 4l5-2 4 2 4-2 6 1v5l-3 8-5 1-4-5-6-3z" fill="#3c3c3c" stroke="#888"/><path d="M3 9l8 2 4 6 1 3-6-4z" fill="#bbb" stroke="none"/><ellipse cx="5" cy="6" rx="3" ry="3" fill="#7a86e8" stroke="#223"/><ellipse cx="16" cy="11" rx="3" ry="4" fill="#7a86e8" stroke="#223"/></svg>
        <label for="find">查找</label><input id="find" type="text">
      </div>
      <div class="panes">
        <ul class="tree">
          <li>文字</li>
          <li class="box minus">直线/箭头</li>
          <li class="sub">箭头</li>
          <li class="sub sel"><span>箭头线</span></li>
          <li class="sub">延伸线</li>
          <li class="sub">断开</li>
          <li class="sub lastsub">透视缩短符号</li>
          <li>层叠</li>
          <li>公差</li>
          <li>双</li>
          <li>二次折弯</li>
          <li>窄</li>
          <li>单侧尺寸</li>
          <li>尺寸线</li>
          <li class="box plus">文本</li>
          <li class="last">参考</li>
          <li class="none"></li>
        </ul>
        <div class="props">
          <div class="sections">
            <h3>范围<button aria-label="收起"><svg viewBox="0 0 14 12"><path d="M2 10l5-8 5 8"/></svg></button></h3>
            <div class="sect s1"><label><input type="checkbox">应用于整个尺寸</label></div>
            <h3>第 1 侧箭头线<button aria-label="收起"><svg viewBox="0 0 14 12"><path d="M2 10l5-8 5 8"/></svg></button></h3>
            <div class="sect s2"><label class="focus"><input type="checkbox" checked><span>显示箭头线</span></label>
              <div class="controls"><button class="swatch" aria-label="颜色"></button><span class="combo line"><select aria-label="线型"><option></option></select></span><span class="combo width"><select aria-label="线宽"><option>0.13 mm</option></select></span></div></div>
            <h3>第 2 侧箭头线<button aria-label="收起"><svg viewBox="0 0 14 12"><path d="M2 10l5-8 5 8"/></svg></button></h3>
            <div class="sect s2"><label><input type="checkbox" checked><span>显示箭头线</span></label>
              <div class="controls"><button class="swatch" aria-label="颜色"></button><span class="combo line"><select aria-label="线型"><option></option></select></span><span class="combo width"><select aria-label="线宽"><option>0.13 mm</option></select></span></div></div>
            <h3>短划线<button aria-label="收起"><svg viewBox="0 0 14 12"><path d="M2 10l5-8 5 8"/></svg></button></h3>
            <div class="sect s3">
              <div class="field tall"><label for="dir">方向</label><span class="combo dir"><svg viewBox="0 0 14 10" width="14" height="10"><path class="r" d="M1 9l7-7h6"/><path class="R" d="M0 10l1-5 4 4z"/></svg><select id="dir"><option>指引线从左侧</option></select></span></div>
              <div class="field"><label for="len">长度</label><input id="len" class="num" value="5.00000"></div>
              <div class="field"><label for="gap">短划线上文本间隙因子</label><input id="gap" class="num" value="0.10000"></div>
            </div>
            <h3></h3>
          </div>
          <div class="scroll"><i class="dd upa"></i><div class="thumb"><i></i></div><i class="dd"></i></div>
        </div>
      </div>
      <h3 class="inherit">继承<button aria-label="展开"><svg viewBox="0 0 14 12"><path d="M2 2l5 8 5-8"/></svg></button></h3>
      <footer><button class="ok">关闭</button></footer>
    </div>
    <div class="bottom"></div>
    <i class="mark m1"></i>
    <i class="mark m2"></i>
  </section>
</main>
</body>
</html>
```
FILE: styles.css
```css
* { box-sizing: border-box; }
body {
  margin: 0;
  min-height: 100vh;
  display: flex;
  flex-direction: column;
  overflow: hidden;
  background: #fff;
  color: #000;
  font: 12px/14px "Liberation Sans", "Noto Sans CJK SC", sans-serif;
}
button, input, select { font: inherit; color: inherit; }
button { padding: 0; border: 0; background: none; }
h1, h2, h3, ul { margin: 0; padding: 0; font-size: 12px; }
svg { display: block; fill: none; stroke: #000; stroke-width: 1; }

/* icon paint */
.t svg { stroke-width: 1.25; }
.r { stroke: #c4121c; }
.R { fill: #d01820; stroke: none; }
.b { stroke: #1a1a9c; }
.B { fill: #1a50c8; stroke: #10309a; }
.B3 { fill: #3b86e0; stroke: #1a50a8; }
.O3 { fill: #ffc12e; stroke: #c87a00; }
.K { fill: #000; stroke: none; }
.W { fill: #fff; stroke: none; }
.Y { fill: #ffe600; stroke: none; }
.w { fill: #fff; }
.w2 { fill: #fff; stroke-width: 1.5; }
.g { stroke: #888; }
.gd { fill: #777; stroke: none; }
.rw { fill: #fff; stroke: #d01820; stroke-width: 1.5; fill-opacity: .8; }
.rl { fill: #f08080; stroke: #c4121c; stroke-dasharray: 1 1; }
.hb { fill: #9ab0f0; stroke: #1a1a9c; }
.pale { fill: #e6edff; stroke: #5b78c8; }
.or { fill: #ff9416; stroke: #c86a00; }
.star { fill: #fff04a; stroke: #c8b828; }
.lay { fill: #e4f2ee; stroke: #2c5a54; }
.chk { stroke: #12a028; stroke-width: 3; }
.bin { fill: #556; stroke: #334; }
text { stroke: none; fill: #000; font-family: "Liberation Sans", sans-serif; }
.ta { font-size: 16px; font-weight: 700; fill: #26106a; }
.tb { font: italic 700 28px "Liberation Serif", serif; fill: #1010d0; }
.ts { font-size: 7px; font-weight: 700; }
.tm { font-size: 7px; font-weight: 700; }
.tx { font-size: 8px; font-weight: 700; fill: #b01018; }
.tn { font-size: 11px; font-weight: 700; fill: #1a1a9c; }
.tr { fill: #b01018; }
.tg { fill: #888; }

.dd { display: block; width: 0; height: 0; border: 3px solid transparent; border-top-color: #000; border-bottom: 0; }

/* menu */
.menu {
  flex: none;
  height: 14px;
  display: flex;
  gap: 26px;
  overflow: hidden;
  background: linear-gradient(90deg, #1a1a1a 95%, #444);
}
.menu-tab { width: 10px; margin-right: -12px; background: #e2e2e2; }
.menu a { color: #fff; text-decoration: none; white-space: nowrap; margin-top: -5px; }

/* ribbon */
.ribbon {
  flex: none;
  display: flex;
  overflow: hidden;
  height: 86px;
  background: linear-gradient(#e4e4e4, #cdcdcd);
  border-bottom: 1px solid #8e8e8e;
}
.group { position: relative; flex: none; display: flex; flex-direction: column; border-right: 1px solid #f4f4f4; }
.group::after { content: ""; position: absolute; right: 0; top: 4px; bottom: 4px; width: 1px; background: #b4b4b4; }
.group h2 { height: 16px; padding-right: 16px; font-weight: 400; line-height: 18px; text-align: center; color: #333; white-space: nowrap; }
.corner { position: absolute; right: 9px; bottom: 9px; border-top-color: #444; }
.group-body { height: 69px; display: flex; align-items: flex-start; padding-top: 2px; }
.rows { flex-direction: column; padding: 5px 0 0 5px; }
.row { height: 29px; display: flex; align-items: center; gap: 4px; }
.row .t { width: 19px; }
.t { flex: none; width: 16px; height: 22px; display: flex; align-items: center; justify-content: center; }
.t svg { flex: none; width: 16px; height: 16px; overflow: visible; }
.sep { flex: none; width: 1px; height: 21px; background: #fafafa; box-shadow: -1px 0 #aaa; }
.big { flex: none; display: flex; flex-direction: column; align-items: center; padding-top: 3px; line-height: 13px; white-space: nowrap; }
.big.narrow { width: 32px; }
.big .dd { margin-top: 4px; }
.ic32 { width: 32px; height: 32px; margin-bottom: 5px; }
.bigA { width: 30px; height: 30px; margin: 1px 0 6px; border: 1px solid #1a1a8c; background: #fff; font: 700 32px/28px "Liberation Serif", serif; }
.cols { display: grid; grid-auto-rows: 22px; }
.c2 { grid-template-columns: repeat(2, 16px); column-gap: 8px; }
.c3 { grid-template-columns: repeat(3, 16px); column-gap: 9px; }
.c4 { grid-template-columns: repeat(4, 16px); column-gap: 9px; }
.c3 .t:nth-child(7) { grid-column: 1; }
.g-view { width: 179px; }
.g-view .group-body { padding-left: 10px; gap: 0 10px; }
.g-view h2 { padding-right: 60px; }
.g-size { width: 130px; }
.g-size .group-body, .g-note .group-body { padding-left: 11px; gap: 9px; }
.g-note { width: 167px; }
.g-note .note-dd { margin: 10px 0 0 -2px; }
.g-sketch { width: 122px; }
.g-sketch .group-body { padding: 4px 5px 0 6px; }
.g-table { width: 184px; }
.g-table .group-body { padding-left: 10px; gap: 8px; }
.g-edit { width: 65px; }
.g-edit .group-body { padding-left: 7px; }
.g-std { width: 104px; }
.g-gc { width: 398px; }
.g-fmt { flex: 1 0 220px; margin-right: -89px; }
.gallery { flex: 1; display: flex; height: 66px; border: 1px solid #aaa; background: #e2e2e2; }
.gallery-grid { flex: 1; display: grid; grid-template-columns: repeat(4, 1fr); justify-items: center; align-content: center; }
.gallery .t { height: 21px; }
.gallery-scroll { width: 17px; display: flex; flex-direction: column; }
.gallery-scroll button { flex: 1; display: flex; flex-direction: column; gap: 2px; align-items: center; justify-content: center; border-left: 1px solid #aaa; border-bottom: 1px solid #aaa; }
.up { border: 3px solid transparent; border-bottom-color: #aaa; border-top: 0; }
.bar { width: 7px; height: 1px; background: #000; }

/* selection bar */
.selbar { flex: none; height: 28px; display: flex; align-items: center; background: #d6d6d6; border-bottom: 1px solid #777; box-shadow: inset 0 4px 4px -2px #bbb; }
.dcombo { position: relative; width: 123px; height: 17px; margin-left: 7px; border: 1px solid #a4a4a4; border-radius: 3px; box-shadow: 1px 1px #f4f4f4; }
.dcombo.first { width: 92px; margin-left: 0; border-left: 0; }
.dcombo select { width: 100%; height: 15px; padding: 0 0 0 1px; border: 0; appearance: none; background: none; color: #999; opacity: 1; line-height: 14px; text-shadow: 1px 1px #fff; }
.dcombo::before { content: ""; position: absolute; right: 0; top: 0; width: 17px; height: 15px; background: #e4e4e4; border-left: 1px solid #aaa; }
.dcombo::after { content: ""; position: absolute; right: 3px; top: 5px; border: 5px solid transparent; border-top-color: #999; border-bottom: 0; }
.seltools { display: flex; align-items: center; gap: 7px; margin-left: 7px; }
.seltools .t { width: 18px; }
.seltools .dd { flex: none; margin: 0 0 0 -4px; }
.seltools .sep { height: 18px; }
.seltools .wide { margin: 0 4px 0 3px; }
.dim { opacity: .55; }
.seltools .t.on { height: 17px; border: 1px solid #c4121c; background: #eee; }

/* drawing */
.canvas { position: relative; flex: 1; overflow: hidden; background: #fff; }
.drawing { position: absolute; left: 0; top: 0; width: 100%; height: 100%; }
.ln { stroke: #000; }
.dark { stroke: #333; }
.grey { stroke: #777; }
.orange-line { stroke: #f7a24b; stroke-width: 3; }
.orange { fill: #f7a24b; stroke: none; }
.dim-orange text, .dim-black text { font-family: Lato, "Liberation Sans", sans-serif; font-size: 66px; }
.dim-orange text { font-weight: 300; fill: #f7a24b; }
.dim-black text { font-weight: 100; fill: #000; }

/* dialog */
.dialog { position: absolute; left: 192px; top: 43px; width: 587px; border-radius: 6px; background: #ebebeb; }
.title { display: flex; align-items: center; height: 22px; padding-left: 2px; border-radius: 6px 6px 0 0; border: 1px solid #000; background: linear-gradient(#666, #444 35%, #1a1a1a 40%); color: #fff; }
.title h1 { flex: 1; margin-left: 2px; padding-left: 8px; border-left: 1px solid #ccc; line-height: 20px; font-weight: 700; }
.x { width: 20px; height: 20px; border-left: 1px solid #ccc; display: flex; align-items: center; justify-content: center; }
.dialog-body { padding: 8px 10px 0 9px; border: solid #777; border-width: 0 1px; background: linear-gradient(#ebebeb 90%, #e0e0e0); }
.search { display: flex; align-items: center; height: 20px; }
.search label { margin-left: 1px; width: 31px; padding-top: 4px; }
.search svg { margin-top: 4px; }
.search input { flex: 1; height: 17px; align-self: flex-start; border: 1px solid #666; border-radius: 4px; background: #fff; }
.panes { display: flex; gap: 2px; height: 339px; margin-top: 10px; }
.tree { position: relative; width: 175px; list-style: none; border: 1px solid #666; background: #fff; overflow: hidden; padding: 1px 1px 0; }
.tree::before { content: ""; position: absolute; left: 10px; top: 11px; height: 300px; border-left: 1px dotted #999; z-index: 1; }
.tree li { position: relative; height: 20px; padding-left: 22px; line-height: 20px; border-bottom: 1px solid #ddd; color: #222; }
.tree li:nth-child(even) { background: #f6f6f6; }
.tree li::before { content: ""; position: absolute; left: 9px; top: 10px; width: 9px; border-top: 1px dotted #999; }
.tree .sub { padding-left: 40px; }
.tree .sub::before { left: 28px; }
.tree .sub::after { content: ""; position: absolute; left: 28px; top: 0; height: 20px; border-left: 1px dotted #999; }
.tree .lastsub::after { height: 11px; }
.tree .sel { padding-left: 38px; color: #fff; }
.sel span { display: block; padding-left: 2px; background: #39f; height: 19px; }
.tree .none { border: 0; background: #fff; }
.tree .none::before { display: none; }
.tree .box::after { position: absolute; z-index: 2; left: 4px; top: 5px; width: 9px; height: 9px; border: 1px solid #888; border-radius: 2px; background: #fff; line-height: 7px; text-align: center; font-size: 10px; color: #000; }
.tree .minus::after { content: "−"; }
.tree .plus::after { content: "+"; }
.props { flex: 1; display: flex; border: 1px solid #777; border-width: 1px 0 0 1px; overflow: hidden; }
.sections { flex: 1; overflow: hidden; border: solid #777; border-width: 0 1px 0 0; background: #d3d3d3; }
h3 { position: relative; display: flex; align-items: center; height: 23px; padding-left: 6px; background: linear-gradient(#fff, #f2f3f3 50%, #dcdddf 52%, #d8d9db); border-bottom: 2px solid #888; font-weight: 700; }
h3 button { width: 22px; height: 20px; margin-left: auto; border-left: 1px solid #aaa; display: flex; align-items: center; justify-content: center; }
h3 svg { width: 14px; height: 12px; stroke: #666; stroke-width: 3; }
.sect { padding-left: 9px; border-left: 1px solid #999; box-shadow: inset 2px 2px 3px #b8b8b8; }
.sect > label { display: flex; align-items: center; height: 16px; }
.s1 { height: 35px; padding-top: 8px; }
.s2 { height: 63px; padding-top: 8px; }
.s3 { height: 81px; padding-top: 5px; }
input[type=checkbox] { appearance: none; width: 16px; height: 16px; margin: 0 2px 0 0; border: 1px solid #666; border-radius: 3px; background: linear-gradient(#ddd, #fafafa); }
.sect > label input { margin-left: -1px; }
input[type=checkbox]:checked { background: linear-gradient(#3c86c8, #b8f4ff); position: relative; }
input[type=checkbox]:checked::after { content: ""; position: absolute; left: 5px; top: 1px; width: 5px; height: 9px; border: solid #123a8c; border-width: 0 2px 2px 0; rotate: 40deg; }
.focus span { outline: 1px dotted #333; }
.controls { display: flex; justify-content: flex-end; align-items: center; gap: 4px; padding-right: 9px; }
.swatch { width: 24px; height: 24px; background: #963; border: 1px solid #666; }
.combo { position: relative; display: flex; align-items: center; height: 23px; border: 1px solid #666; border-radius: 4px; background: #fff; box-shadow: 1px 1px #fff; overflow: hidden; }
.controls .swatch { margin-right: -1px; }
.combo select { width: 100%; height: 21px; padding: 0; border: 0; appearance: none; background: none; }
.combo::before { content: ""; position: absolute; right: 0; top: 0; bottom: 0; width: 17px; background: linear-gradient(#3a78d0, #a8ccf8 40%, #5aa8e8 50%, #90d4fc); border-left: 1px solid #2a62b8; }
.combo::after { content: ""; position: absolute; right: 3px; top: 8px; border: 5px solid transparent; border-top: 6px solid #111; border-bottom: 0; }
.line { width: 102px; }
.line select { background: linear-gradient(#000, #000) 7px 10px / 71px 2px no-repeat; }
.width { width: 109px; }
.width select { padding-left: 46px; background: linear-gradient(#000, #000) 4px 11px / 38px 1px no-repeat; font: 10px "Liberation Mono", monospace; }
.field { display: flex; align-items: center; justify-content: space-between; height: 20px; padding-right: 9px; }
.field label { margin-left: -1px; }
.tall { height: 27px; }
.dir { width: 106px; padding: 0 17px 0 4px; }
.dir svg { flex: none; margin-right: 5px; }
.dir select { min-width: 0; overflow: hidden; text-overflow: clip; }
.num { width: 56px; height: 17px; padding: 0 0 0 13px; border: 1px solid #666; border-radius: 4px; background: #fff; font: 10px "Liberation Mono", monospace; }
.scroll { width: 19px; display: flex; flex-direction: column; align-items: center; background: #f2f2f2; padding: 7px 0 6px; }
.scroll .upa { transform: rotate(180deg); margin-bottom: 7px; }
.scroll .dd:last-child { margin-top: auto; }
.thumb { width: 15px; height: 251px; display: flex; align-items: center; justify-content: center; border: 1px solid #888; border-radius: 1px; background: linear-gradient(90deg, #f4f4f4, #d0d0d4); }
.thumb i { width: 6px; height: 8px; background: repeating-linear-gradient(#666 0 1px, #eee 1px 3px); }
.inherit { border-bottom: 1px solid #999; border-right: 1px solid #999; }
footer { display: flex; justify-content: flex-end; margin: 8px -3px 0; padding: 4px 9px 11px; border-top: 1px solid #bbb; box-shadow: inset 0 1px #fff; }
.ok { width: 53px; height: 19px; border: 1px solid #2f7030; border-radius: 4px; background: linear-gradient(#d8f4d0, #b4e4a4 45%, #6cc858 50%, #b4f49a); line-height: 17px; }
.bottom { height: 8px; border-radius: 0 0 6px 6px; background: #1a1a1a; border-top: 1px solid #555; }
.mark { position: absolute; border: 1px solid #ff3b3b; pointer-events: none; }
.m1 { left: 183px; top: 130px; width: 160px; height: 41px; }
.m2 { left: 190px; top: 219px; width: 153px; height: 55px; }
```
